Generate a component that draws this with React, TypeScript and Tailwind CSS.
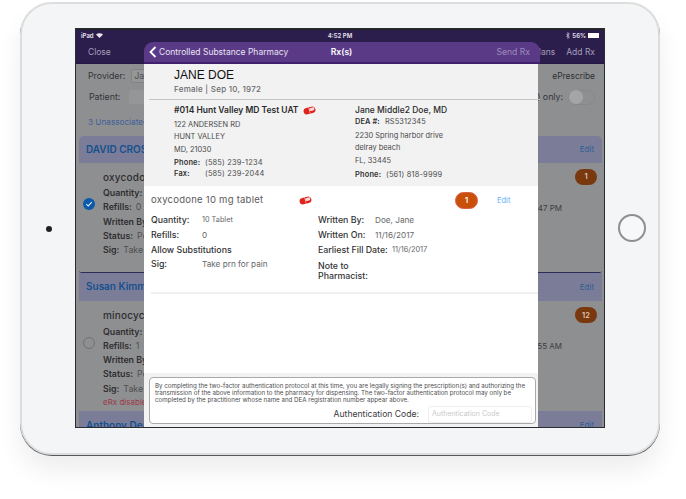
import React from "react";

const Pill = () => (
  <svg width="13" height="9" viewBox="0 0 13 9" className="shrink-0">
    <g transform="rotate(-14 6.5 4.5)">
      <rect x="0.5" y="1.2" width="12" height="6.6" rx="3.3" fill="#e0231c" />
      <rect x="6.4" y="2.2" width="5.2" height="3.2" rx="1.6" fill="#f8d9d6" />
      <rect x="6" y="1.2" width="0.7" height="6.6" fill="#ffffff" opacity="0.6" />
    </g>
  </svg>
);

const BgRow = ({ label, value }: { label: string; value: string }) => (
  <div className="h-[14.3px] flex items-center gap-[4px] text-[8.8px] whitespace-nowrap">
    <span className="font-semibold text-[#2e2e30]">{label}</span>
    <span className="text-[#4f4f51]">{value}</span>
  </div>
);

const Card = ({
  name, drug, badge, checked, time, rows, footer,
}: {
  name: string; drug: string; badge: string; checked: boolean; time: string;
  rows: [string, string][]; footer?: boolean;
}) => (
  <div>
    <div className={`bg-[#7b7d98] flex items-center justify-between pr-[8px] ${checked ? "h-[27px] pl-[7px]" : "h-[28px] pl-[7px]"}`}>
      <div className="w-[58px] overflow-hidden whitespace-nowrap text-[10px] text-[#14508e] font-semibold">{name}</div>
      <span className="text-[8px] text-[#2f6094]">Edit</span>
    </div>
    {drug && (
      <div className={`flex bg-[#8e8f91] pl-[4px] pr-[5px] ${checked ? "pb-[15px]" : "pb-[2px]"}`}>
        <div className={`w-[20px] ${checked ? "pt-[35px]" : "pt-[36px]"}`}>
          {checked ? (
            <svg width="12" height="12" viewBox="0 0 12 12">
              <circle cx="6" cy="6" r="6" fill="#0b59ad" />
              <path d="M3.2 6.2 L5.2 8 L8.8 4.2" stroke="#dfe8f3" strokeWidth="1.1" fill="none" />
            </svg>
          ) : (
            <div className="w-[12px] h-[12px] rounded-full border border-[#6f7072]" />
          )}
        </div>
        <div className="w-[41px] overflow-hidden pt-[6px]">
          <div className="h-[17px] flex items-center text-[10px] text-[#2e2e30] font-medium tracking-[0.2px] whitespace-nowrap">{drug}</div>
          {rows.map(([l, v]) => <BgRow key={l} label={l} value={v} />)}
          {footer && <div className="h-[14px] flex items-center text-[8px] text-[#9c3a48] whitespace-nowrap">eRx disabled</div>}
        </div>
        <div className="flex-1 flex flex-col items-end pt-[6px]">
          <div className="w-[22px] h-[16.5px] rounded-full bg-[#7a380f] text-[#d8c3b2] text-[7.5px] font-semibold flex items-center justify-center">{badge}</div>
          <div className="mt-[17px] mr-[35px] text-[8px] text-[#3d3d3f]">{time}</div>
        </div>
      </div>
    )}
  </div>
);

const Background = () => (
  <div className="h-full w-full bg-[#8e8f91] overflow-hidden">
    <div className="h-[12px] bg-[#2b1e4d] flex items-center px-[5px] text-[6px] font-semibold text-[#e9e6ee]">
      <div className="flex-1 flex items-center gap-[2px]">
        <span>iPad</span>
        <svg width="7" height="5" viewBox="0 0 7 5"><path d="M0 1.6 A5 5 0 0 1 7 1.6 L3.5 5 Z" fill="#e9e6ee" /></svg>
      </div>
      <div>4:52 PM</div>
      <div className="flex-1 flex items-center justify-end gap-[2px]">
        <svg width="4" height="7" viewBox="0 0 4 7"><path d="M0.3 1.8 L3.4 5 L1.9 6.5 V0.5 L3.4 2 L0.3 5.2" stroke="#e9e6ee" strokeWidth="0.6" fill="none" /></svg>
        <span>56%</span>
        <div className="w-[11px] h-[5.5px] bg-white" />
      </div>
    </div>
    <div className="h-[22px] pt-[1px] bg-[#2b1e4d] border-b border-[#221a44] flex items-center justify-between pl-[12px] pr-[9px] text-[8.5px] text-[#a69fb8]">
      <span>Close</span>
      <div className="flex gap-[11px]"><span>Plans</span><span>Add Rx</span></div>
    </div>
    <div className="pl-[12px] pr-[9px]">
      <div className="h-[23px] mt-[1px] flex items-center justify-between text-[8.8px] text-[#343436]">
        <div className="flex items-center gap-[6px]">
          <span>Provider:</span>
          <div className="w-[15px] h-[14px] rounded-l-[2px] bg-[#959698] border-l border-y border-[#828385] pl-[2px] text-[#505052] flex items-center overflow-hidden">Jan</div>
        </div>
        <span className="text-[8.4px] text-[#2f2f33]">ePrescribe</span>
      </div>
      <div className="h-[19px] flex items-center justify-between text-[8.8px] text-[#343436]">
        <div className="flex items-center gap-[9px] pl-[1px]">
          <span>Patient:</span>
          <div className="w-[15px] h-[14px] rounded-l-[2px] bg-[#959698]" />
        </div>
        <div className="flex items-center gap-[5px]">
          <span>) only:</span>
          <div className="w-[27px] h-[15px] rounded-full border border-[#878889] flex items-center">
            <div className="w-[14px] h-[14px] rounded-full bg-[#a5a5a7]" />
          </div>
        </div>
      </div>
      <div className="h-[29px] pt-[2px] flex items-center">
        <div className="w-[56px] overflow-hidden whitespace-nowrap text-[8.2px] text-[#3f5f97]">3 Unassociated</div>
      </div>
    </div>
    <div className="ml-[3px] mr-[2px]">
      <div className="rounded-t-[5px] rounded-b-[3px] overflow-hidden border-b border-[#2d2c58]">
        <Card name="DAVID CROSS" drug="oxycodone" badge="1" checked time="47 PM" rows={[["Quantity:", "10"], ["Refills:", "0"], ["Written By:", "Doe"], ["Status:", "Pending"], ["Sig:", "Take prn"]]} />
      </div>
      <Card name="Susan Kimmel" drug="minocycline" badge="12" checked={false} time="55 AM" rows={[["Quantity:", "30"], ["Refills:", "1"], ["Written By:", "Doe"], ["Status:", "Pending"], ["Sig:", "Take one"]]} footer />
      <Card name="Anthony Dean" drug="" badge="" checked={false} time="" rows={[]} />
    </div>
  </div>
);

const PRow = ({ l, v, lw, cls = "", vcls = "text-[8.2px]" }: { l: string; v: string; lw: string; cls?: string; vcls?: string }) => (
  <div className={`flex items-center whitespace-nowrap ${cls}`}>
    <span className={`${lw} font-medium text-[#333335] text-[8.8px]`}>{l}</span>
    <span className={`text-[#68686a] ${vcls}`}>{v}</span>
  </div>
);

const Modal = () => (
  <div className="absolute left-[68px] top-[12px] bottom-0 w-[396px] flex flex-col">
    <div className="h-[22px] pt-[1px] shrink-0 rounded-t-[9px] bg-[#5a3a87] border-b-2 border-[#3f2170] flex items-center pl-[5px] pr-[10px] text-white">
      <div className="flex-1 flex items-center gap-[2px]">
        <svg width="8" height="12" viewBox="0 0 8 12"><path d="M6.5 1 L1.5 6 L6.5 11" stroke="#fff" strokeWidth="1.8" fill="none" /></svg>
        <span className="text-[8.5px] text-[#e9e3f1]">Controlled Substance Pharmacy</span>
      </div>
      <span className="text-[8.6px] font-semibold mr-[-4px]">Rx(s)</span>
      <div className="flex-1 text-right text-[8.6px] text-[#9d8cbc]">Send Rx</div>
    </div>
    <div className="flex-1 flex flex-col mr-[2px] bg-white">
      <div className="bg-[#f2f2f2] h-[122px] shrink-0">
        <div className="h-[35px] pl-[30px]">
          <div className="pt-[3px] text-[12px] leading-[16px] text-[#111] font-['Liberation_Sans',sans-serif]">JANE DOE</div>
          <div className="text-[8px] leading-[12px] font-medium tracking-[0.25px] text-[#6a6a6c]">Female | Sep 10, 1972</div>
        </div>
        <div className="ml-[5px] mr-[-2px] h-px bg-[#c6c6c6]" />
        <div className="flex pl-[30px] pt-[4px] text-[7.4px] text-[#4a4a4c]">
          <div className="w-[181px]">
            <div className="h-[13px] flex items-center gap-[5px] text-[8.5px] font-semibold text-[#2a2a2c] whitespace-nowrap">#014 Hunt Valley MD Test UAT <Pill /></div>
            <div className="h-[12.5px] mt-[1.5px] flex items-center">122 ANDERSEN RD</div>
            <div className="h-[12.5px] flex items-center">HUNT VALLEY</div>
            <div className="h-[12.5px] flex items-center">MD, 21030</div>
            <div className="h-[11px] mt-[1.5px] flex items-center tracking-[0.2px]"><b className="w-[31px] font-semibold text-[#333]">Phone:</b>(585) 239-1234</div>
            <div className="h-[11px] flex items-center tracking-[0.2px]"><b className="w-[31px] font-semibold text-[#333]">Fax:</b>(585) 239-2044</div>
          </div>
          <div>
            <div className="h-[13px] flex items-center text-[8.5px] font-medium text-[#2a2a2c]">Jane Middle2 Doe, MD</div>
            <div className="h-[11px] flex items-center tracking-[0.1px]"><b className="w-[30px] font-semibold text-[#333]">DEA #:</b>RS5312345</div>
            <div className="h-[12.5px] mt-[1.5px] flex items-center">2230 Spring harbor drive</div>
            <div className="h-[12.5px] flex items-center">delray beach</div>
            <div className="h-[12.5px] flex items-center">FL, 33445</div>
            <div className="h-[11px] mt-[3px] flex items-center tracking-[0.2px]"><b className="w-[31px] font-semibold text-[#333]">Phone:</b>(561) 818-9999</div>
          </div>
        </div>
      </div>
      <div className="h-[108px] shrink-0 ml-[7px] border-b-2 border-[#f0f0f0]">
        <div className="h-[30px] flex items-center">
          <span className="w-[148px] text-[9.5px] text-[#5a5a5c] tracking-[0.25px]">oxycodone 10 mg tablet</span>
          <Pill />
          <div className="ml-[143px] w-[23px] h-[16.5px] rounded-full bg-[#c9500a] border border-[#d9614a] text-white text-[7.5px] font-semibold flex items-center justify-center">1</div>
          <span className="ml-[19px] text-[7.5px] text-[#66aef5]">Edit</span>
        </div>
        <div className="flex mt-[-3px]">
          <div className="w-[167px]">
            <PRow l="Quantity:" v="10 Tablet" lw="w-[51px]" cls="h-[15px]" vcls="text-[7.3px]" />
            <PRow l="Refills:" v="0" lw="w-[51px]" cls="h-[15px]" />
            <div className="h-[14px] flex items-center font-medium text-[#333335] text-[8.8px]">Allow Substitutions</div>
            <PRow l="Sig:" v="Take prn for pain" lw="w-[51px]" cls="h-[15px]" />
          </div>
          <div>
            <PRow l="Written By:" v="Doe, Jane" lw="w-[57px]" cls="h-[15px]" />
            <PRow l="Written On:" v="11/16/2017" lw="w-[57px]" cls="h-[15px]" />
            <PRow l="Earliest Fill Date:" v="11/16/2017" lw="w-[74px]" cls="h-[14px]" vcls="text-[7.4px]" />
            <div className="pt-[4px] text-[8.8px] leading-[10px] font-medium text-[#333335]">Note to<br />Pharmacist:</div>
          </div>
        </div>
      </div>
      <div className="flex-1" />
      <div className="h-[54px] shrink-0 bg-[#f2f2f2] pt-[4px] pl-[5px] pr-[2px]">
        <div className="h-[47px] rounded-[4px] border border-[#a9a9a9] bg-white pl-[5px] pr-[3px] pt-[4px]">
          <p className="text-[6.18px] leading-[7.4px] text-[#4c4c4e] whitespace-nowrap">
            By completing the two-factor authentication protocol at this time, you are legally signing the prescription(s) and authorizing the<br />
            transmission of the above information to the pharmacy for dispensing. The two-factor authentication protocol may only be<br />
            completed by the practitioner whose name and DEA registration number appear above.
          </p>
          <div className="mt-[2px] flex items-center justify-end gap-[9px]">
            <span className="text-[8.6px] text-[#3a3a3c]">Authentication Code:</span>
            <div className="w-[104px] h-[17px] rounded-[3px] border border-[#eeeeee] pl-[3px] flex items-center text-[7px] text-[#c9c9cb]">Authentication Code</div>
          </div>
        </div>
      </div>
    </div>
  </div>
);

export default function App() {
  return (
    <div className="w-[686px] h-[499px] bg-white overflow-hidden pt-[2px] pl-[20px] font-['Inter','Liberation_Sans',sans-serif]">
      <div className="w-[640px] h-[453px] rounded-[32px] border-2 border-[#dcdedd] bg-[#f4f5f7] shadow-[0_1px_0_#55575a,0_16px_24px_rgba(0,0,0,0.07)] flex items-center">
        <div className="w-[54px] flex justify-center">
          <div className="w-[6px] h-[6px] rounded-full bg-[#222]" />
        </div>
        <div className="relative w-[528px] h-[398px] mb-[2px] border-t border-[#222] overflow-hidden shrink-0 shadow-[0_0_0_1px_#2c2c30]">
          <Background />
          <Modal />
        </div>
        <div className="flex-1 flex justify-center pl-[1px]">
          <div className="w-[28px] h-[28px] mb-[2px] rounded-full border-2 border-[#8d8f90] bg-[#f7f8f9]" />
        </div>
      </div>
    </div>
  );
}
